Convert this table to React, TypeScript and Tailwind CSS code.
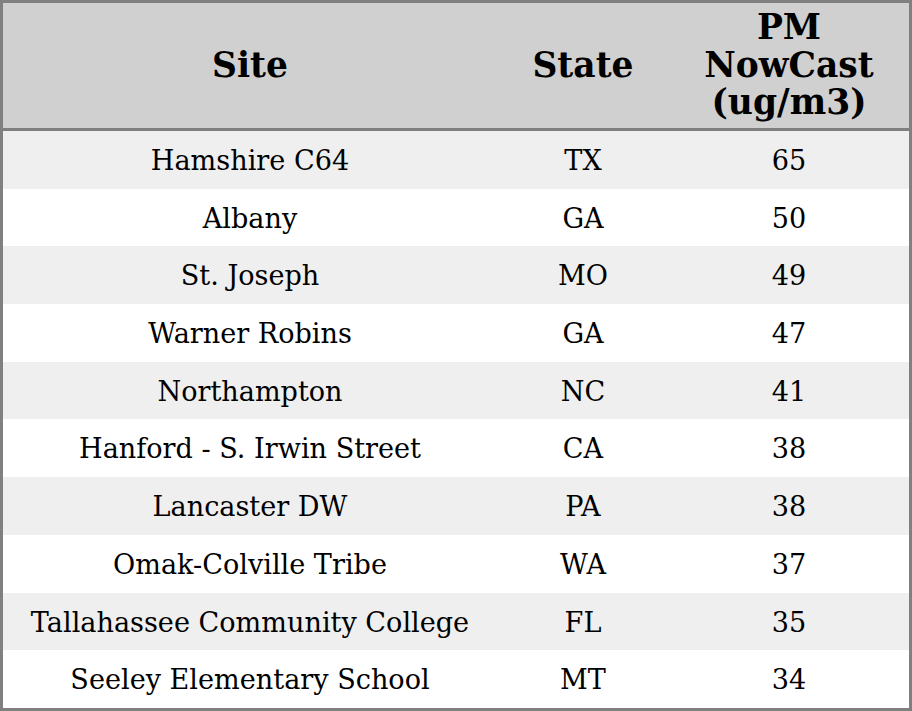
const rows: [string, string, number][] = [
  ["Hamshire C64", "TX", 65],
  ["Albany", "GA", 50],
  ["St. Joseph", "MO", 49],
  ["Warner Robins", "GA", 47],
  ["Northampton", "NC", 41],
  ["Hanford - S. Irwin Street", "CA", 38],
  ["Lancaster DW", "PA", 38],
  ["Omak-Colville Tribe", "WA", 37],
  ["Tallahassee Community College", "FL", 35],
  ["Seeley Elementary School", "MT", 34],
];

export default function App() {
  return (
    <div className="w-[912px] h-[711px] bg-white font-['DejaVu_Serif',serif] text-black">
      <div className="border-[3px] border-[#808080] w-[912px]">
        <div className="grid grid-cols-[494px_172px_240px] h-[128px] bg-[#d0d0d0] border-b-[3px] border-[#808080] font-bold text-[34.5px] leading-[37.5px] text-center items-center">
          <div>Site</div>
          <div>State</div>
          <div>
            PM
            <br />
            NowCast
            <br />
            (ug/m3)
          </div>
        </div>
        {rows.map(([site, state, value], i) => (
          <div
            key={i}
            className={`grid grid-cols-[494px_172px_240px] h-[57.7px] pt-[3px] items-center text-center text-[27.1px] ${
              i % 2 === 0 ? "bg-[#efefef]" : "bg-white"
            }`}
          >
            <div>{site}</div>
            <div>{state}</div>
            <div>{value}</div>
          </div>
        ))}
      </div>
    </div>
  );
}
